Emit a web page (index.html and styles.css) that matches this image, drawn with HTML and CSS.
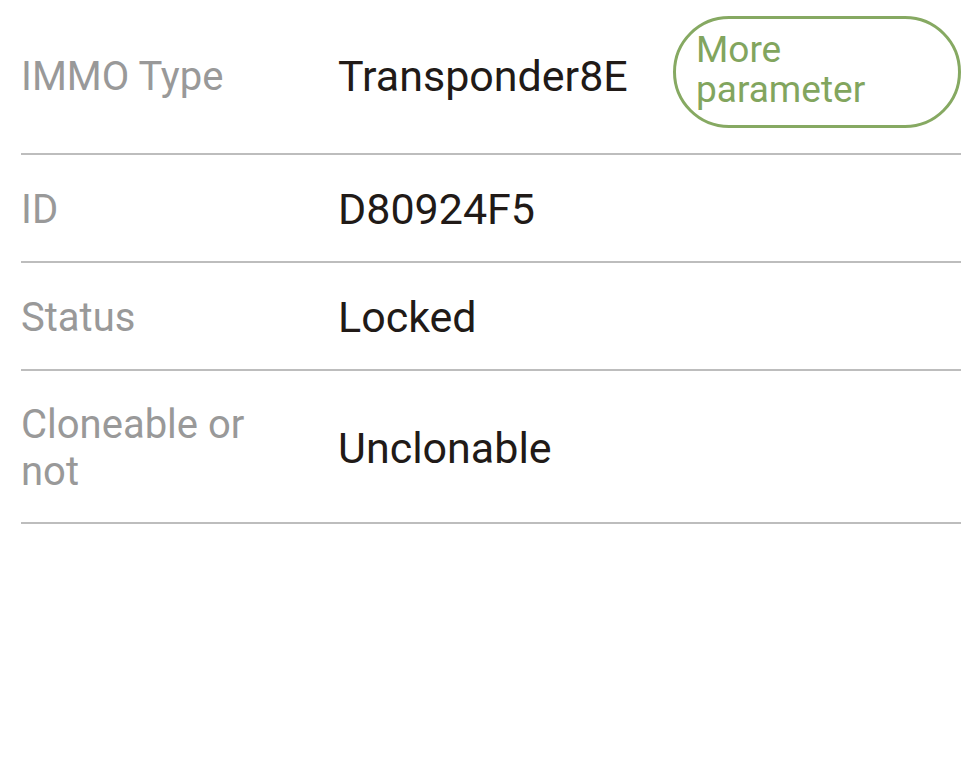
FILE: index.html
```html
<!DOCTYPE html>
<html>
<head>
<meta charset="utf-8">
<link rel="stylesheet" href="styles.css">
</head>
<body>
<div class="list">
  <div class="row row-first">
    <div class="label">IMMO Type</div>
    <div class="value">Transponder8E</div>
    <button class="more">More<br>parameter</button>
  </div>
  <div class="row">
    <div class="label">ID</div>
    <div class="value">D80924F5</div>
  </div>
  <div class="row">
    <div class="label">Status</div>
    <div class="value">Locked</div>
  </div>
  <div class="row">
    <div class="label">Cloneable or not</div>
    <div class="value">Unclonable</div>
  </div>
</div>
</body>
</html>
```
FILE: styles.css
```css
html, body {
  margin: 0;
  padding: 0;
  background: #ffffff;
}
body {
  font-family: Roboto, "Liberation Sans", sans-serif;
  width: 974px;
  height: 764px;
  overflow: hidden;
}
.list {
  margin: 0 13px 0 21px;
}
.row {
  display: flex;
  align-items: center;
  padding: 30px 0 27px;
  border-bottom: 2px solid #bdbdbd;
}
.row-first {
  padding: 16px 0 17px;
}
.label {
  flex: 0 0 317px;
  box-sizing: border-box;
  padding-right: 65px;
  font-size: 40px;
  line-height: 47px;
  color: #999999;
}
.value {
  flex: 1 1 auto;
  font-size: 43px;
  line-height: 49px;
  color: #211a17;
}
.more {
  flex: 0 0 auto;
  width: 288px;
  height: 112px;
  margin-bottom: 8px;
  box-sizing: border-box;
  border: 3px solid #86a962;
  border-radius: 56px;
  background: #ffffff;
  padding: 0 0 4px 20px;
  text-align: left;
  font-family: Roboto, "Liberation Sans", sans-serif;
  font-size: 37px;
  line-height: 40px;
  color: #82a55e;
}
```
